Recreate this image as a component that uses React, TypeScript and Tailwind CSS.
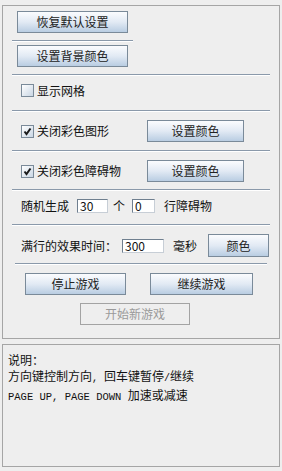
import React from "react";

const font = { fontFamily: '"Noto Sans CJK SC", "DejaVu Sans", sans-serif' };
const mono = { fontFamily: '"Liberation Mono", monospace', fontSize: "10px" };

function Btn({ children, w, h = 22, disabled = false }: { children: React.ReactNode; w: string; h?: number; disabled?: boolean }) {
  if (disabled) {
    return (
      <div className={`${w} h-[22px] flex items-center justify-center border border-[#a3a3a3] bg-[#eeeeee] text-[#9a9a9a] text-[12px] leading-none`}>
        {children}
      </div>
    );
  }
  return (
    <div
      className={`${w} ${h === 23 ? "h-[23px]" : "h-[22px]"} flex items-center justify-center border border-[#7a8a99] bg-gradient-to-b from-[#fbfcfe] via-[#e2eaf4] to-[#b9cde2] text-[#222] text-[12px] leading-none`}
    >
      {children}
    </div>
  );
}

function Sep({ cls = "mx-[9px]" }: { cls?: string }) {
  return (
    <div className={`${cls} flex flex-col`}>
      <div className="h-px bg-[#8a99aa]" />
      <div className="h-px bg-[#ffffff]" />
    </div>
  );
}

function Check({ checked }: { checked?: boolean }) {
  return (
    <div className="w-[13px] h-[13px] border border-[#7a8a99] bg-gradient-to-br from-[#ffffff] to-[#c9d6e4] flex items-center justify-center">
      {checked && (
        <svg width="9" height="9" viewBox="0 0 9 9">
          <path d="M1.5 4.5 L3.5 7 L7.5 1.5" stroke="#1a1a1a" strokeWidth="2" fill="none" />
        </svg>
      )}
    </div>
  );
}

function Input({ w, value }: { w: string; value: string }) {
  return (
    <div className={`${w} h-[14px] bg-white border border-[#6f7f8f] border-r-[#c7ced6] border-b-[#c7ced6] flex items-center pl-[2px] text-[12px] leading-none text-[#111]`}>
      {value}
    </div>
  );
}

export default function App() {
  return (
    <div className="w-[282px] h-[471px] bg-[#eeeeee] flex flex-col text-[#111]" style={font}>
      {/* top panel */}
      <div className="mt-[5px] mx-[2px] h-[334px] border border-[#a5a5a5] flex flex-col">
        <div className="mt-[5px] ml-[14px]">
          <Btn w="w-[111px]">恢复默认设置</Btn>
        </div>
        <div className="mt-[7px] ml-[9px] w-[121px]">
          <Sep cls="" />
        </div>
        <div className="mt-[3px] ml-[14px]">
          <Btn w="w-[111px]">设置背景颜色</Btn>
        </div>
        <div className="mt-[7px]">
          <Sep />
        </div>
        <div className="mt-[8px] ml-[18px] flex items-center gap-[3px] h-[13px] text-[12px] leading-none">
          <Check />
          <span>显示网格</span>
        </div>
        <div className="mt-[13px]">
          <Sep />
        </div>
        <div className="mt-[8px] ml-[18px] flex items-center h-[22px] text-[12px] leading-none">
          <div className="w-[126px] flex items-center gap-[3px]">
            <Check checked />
            <span>关闭彩色图形</span>
          </div>
          <Btn w="w-[97px]">设置颜色</Btn>
        </div>
        <div className="mt-[8px]">
          <Sep />
        </div>
        <div className="mt-[8px] ml-[18px] flex items-center h-[22px] text-[12px] leading-none">
          <div className="w-[126px] flex items-center gap-[3px]">
            <Check checked />
            <span>关闭彩色障碍物</span>
          </div>
          <Btn w="w-[97px]">设置颜色</Btn>
        </div>
        <div className="mt-[7px]">
          <Sep />
        </div>
        <div className="mt-[4px] ml-[18px] flex items-center h-[22px] text-[12px] leading-none">
          <span className="w-[56px]">随机生成</span>
          <Input w="w-[31px]" value="30" />
          <span className="ml-[5px] w-[19px]">个</span>
          <Input w="w-[23px]" value="0" />
          <span className="ml-[9px]">行障碍物</span>
        </div>
        <div className="mt-[7px]">
          <Sep />
        </div>
        <div className="mt-[8px] ml-[18px] flex items-center h-[23px] text-[12px] leading-none">
          <span className="w-[101px]">满行的效果时间：</span>
          <Input w="w-[42px]" value="300" />
          <span className="ml-[9px] w-[35px]">毫秒</span>
          <Btn w="w-[61px]" h={23}>颜色</Btn>
        </div>
        <div className="mt-[6px]">
          <Sep cls="mx-[12px]" />
        </div>
        <div className="mt-[8px] ml-[22px] flex items-center gap-[24px]">
          <Btn w="w-[101px]">停止游戏</Btn>
          <Btn w="w-[103px]">继续游戏</Btn>
        </div>
        <div className="mt-[8px] ml-[77px]">
          <Btn w="w-[110px]" disabled>开始新游戏</Btn>
        </div>
      </div>
      {/* bottom panel */}
      <div className="mt-[5px] mx-[2px] h-[123px] border border-[#a5a5a5] px-[5px] pt-[7px] text-[12px] leading-[16px]">
        <div>说明：</div>
        <div className="whitespace-pre">
          方向键控制方向<span style={mono}>, </span>回车键暂停<span style={mono}>/</span>继续
        </div>
        <div className="whitespace-pre">
          <span style={{ fontFamily: '"Liberation Mono", monospace', fontSize: "10.5px" }}>PAGE UP, PAGE DOWN </span>
          <span>加速或减速</span>
        </div>
      </div>
    </div>
  );
}
